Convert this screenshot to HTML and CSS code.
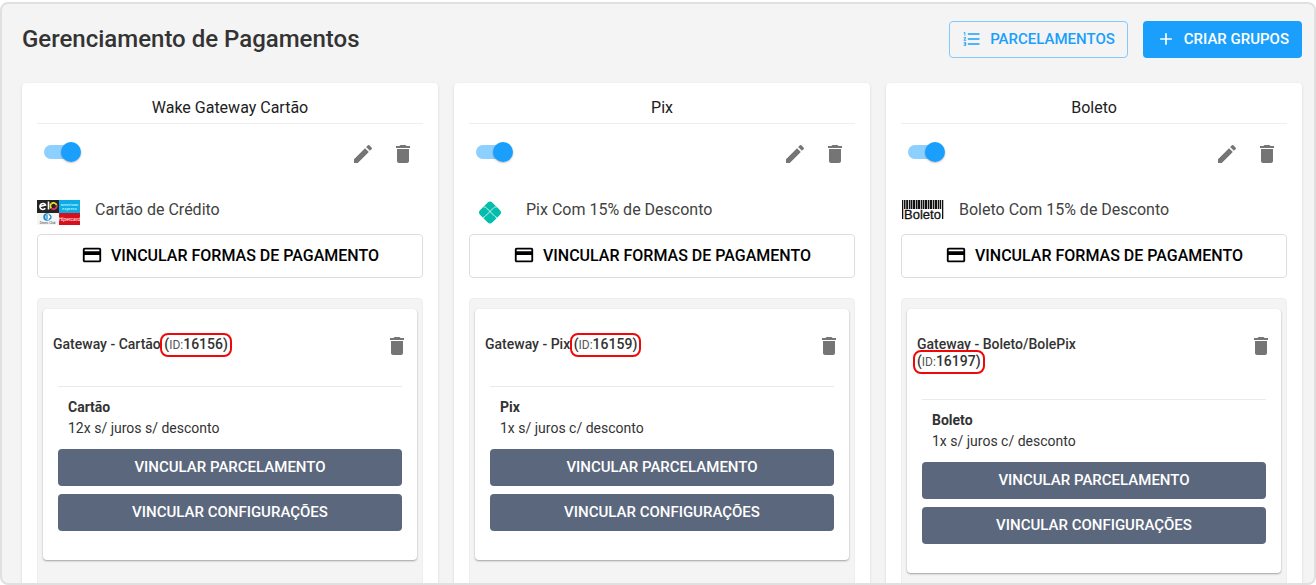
FILE: index.html
```html
<!DOCTYPE html>
<html lang="pt-BR">
<head>
<meta charset="utf-8">
<title>Gerenciamento de Pagamentos</title>
<meta name="viewport" content="width=device-width, initial-scale=1">
<link rel="stylesheet" href="styles.css">
</head>
<body>
<svg class="sprite" aria-hidden="true">
  <symbol id="i-edit" viewBox="0 0 24 24"><path d="M3 17.25V21h3.75L17.81 9.94l-3.75-3.75L3 17.25zM20.71 7.04a1 1 0 0 0 0-1.41l-2.34-2.34a1 1 0 0 0-1.41 0l-1.83 1.83 3.75 3.75 1.83-1.83z"/></symbol>
  <symbol id="i-trash" viewBox="0 0 24 24"><path d="M6 19c0 1.1.9 2 2 2h8c1.1 0 2-.9 2-2V7H6v12zM19 4h-3.5l-1-1h-5l-1 1H5v2h14V4z"/></symbol>
  <symbol id="i-card" viewBox="0 0 24 24"><path d="M20 4H4c-1.11 0-1.99.89-1.99 2L2 18c0 1.11.89 2 2 2h16c1.11 0 2-.89 2-2V6c0-1.11-.89-2-2-2zm0 14H4v-6h16v6zm0-10H4V6h16v2z"/></symbol>
  <symbol id="i-list" viewBox="0 0 24 24"><path d="M2 17h2v.5H3v1h1v.5H2v1h3v-4H2v1zm1-9h1V4H2v1h1v3zm-1 3h1.8L2 13.1v.9h3v-1H3.200L5 10.900V10H2v1zm5-6v2h14V5H7zm0 14h14v-2H7v2zm0-6h14v-2H7v2z"/></symbol>
  <symbol id="i-plus" viewBox="0 0 24 24"><path d="M19 13h-6v6h-2v-6H5v-2h6V5h2v6h6v2z"/></symbol>
</svg>
<main class="frame">
  <header class="topbar">
    <h1 class="page-title">Gerenciamento de Pagamentos</h1>
    <div class="actions">
      <button class="btn btn-outline" type="button"><svg class="icon icon-sm"><use href="#i-list"/></svg>PARCELAMENTOS</button>
      <button class="btn btn-primary" type="button"><svg class="icon icon-sm"><use href="#i-plus"/></svg>CRIAR GRUPOS</button>
    </div>
  </header>

  <div class="groups">
    <section class="group">
      <h2 class="group-title">Wake Gateway Cartão</h2>
      <div class="group-tools">
        <input class="switch" type="checkbox" role="switch" aria-label="Ativar Wake Gateway Cartão" checked>
        <div class="tool-icons">
          <button class="icon-btn" type="button" aria-label="Editar"><svg class="icon"><use href="#i-edit"/></svg></button>
          <button class="icon-btn" type="button" aria-label="Excluir"><svg class="icon"><use href="#i-trash"/></svg></button>
        </div>
      </div>
      <div class="method">
        <svg class="method-logo" viewBox="0 0 43 25" width="43" height="25" aria-hidden="true">
          <rect width="22" height="13" fill="#242424"/>
          <rect x="22" width="21" height="13" fill="#0cace4"/>
          <rect y="13" width="22" height="12" fill="#f3f5f6"/>
          <rect x="22" y="13" width="21" height="12" fill="#d8101c"/>
          <path d="M3 6.500L8.500 5A3 3 0 1 0 8.300 8.300M11.500 1.500V9.500" fill="none" stroke="#fff" stroke-width="1.600"/>
          <path d="M14.400 8.300A3.200 3.200 0 0 1 14.400 3.700" fill="none" stroke="#f4e12c" stroke-width="1.700"/>
          <path d="M14.400 3.700A3.200 3.200 0 0 1 19.700 5.400" fill="none" stroke="#f4e12c" stroke-width="1.800"/>
          <path d="M19.700 5.400A3.200 3.200 0 0 1 14.400 8.300" fill="none" stroke="#e7305a" stroke-width="1.800"/>
          <text class="logo-text logo-bold" x="32.500" y="6" font-size="4" fill="#b8ecff">american</text>
          <text class="logo-text logo-bold" x="32.500" y="10" font-size="4" fill="#b8ecff">express</text>
          <circle cx="10" cy="17" r="3.700" fill="#1784c7"/>
          <circle cx="11" cy="17" r="2.700" fill="#fff"/>
          <path d="M10 15v4M12 15a2 2 0 0 1 0 4" stroke="#1784c7" stroke-width="1.200" fill="none"/>
          <text class="logo-text" x="10.500" y="23.800" font-size="3" fill="#333">Diners Club</text>
          <text class="logo-text logo-slant" x="32.500" y="21" font-size="5" fill="#fff">Hipercard</text>
        </svg>
        <span class="method-name">Cartão de Crédito</span>
      </div>
      <button class="btn btn-link" type="button"><svg class="icon icon-md"><use href="#i-card"/></svg>VINCULAR FORMAS DE PAGAMENTO</button>
      <div class="panel">
        <article class="gateway">
          <div class="gateway-head">
            <h3 class="gateway-title">Gateway - Cartão <span class="gateway-id">(<small class="id-label">ID:</small>16156)</span></h3>
            <button class="icon-btn" type="button" aria-label="Excluir"><svg class="icon"><use href="#i-trash"/></svg></button>
          </div>
          <div class="gateway-body">
            <div class="plan"><strong class="plan-name">Cartão</strong><span>12x s/ juros s/ desconto</span></div>
            <button class="btn btn-slate" type="button">VINCULAR PARCELAMENTO</button>
            <button class="btn btn-slate" type="button">VINCULAR CONFIGURAÇÕES</button>
          </div>
        </article>
      </div>
    </section>

    <section class="group">
      <h2 class="group-title">Pix</h2>
      <div class="group-tools">
        <input class="switch" type="checkbox" role="switch" aria-label="Ativar Pix" checked>
        <div class="tool-icons">
          <button class="icon-btn" type="button" aria-label="Editar"><svg class="icon"><use href="#i-edit"/></svg></button>
          <button class="icon-btn" type="button" aria-label="Excluir"><svg class="icon"><use href="#i-trash"/></svg></button>
        </div>
      </div>
      <div class="method">
        <svg class="method-logo" viewBox="0 0 42 25" width="42" height="25" aria-hidden="true">
          <path d="M18.500 2.700Q21 .2 23.500 2.700L30.800 10Q33.300 12.500 30.800 15L23.500 22.300Q21 24.800 18.500 22.300L11.200 15Q8.700 12.500 11.200 10Z" fill="#05bdad"/>
          <path d="M14.500 7h1q1 0 1.700.7L26 16.500q1 1 2 1M27.500 7h-1q-1 0-1.700.7L16 16.500q-1 1-2 1" fill="none" stroke="#dff8f5" stroke-width=".9"/>
        </svg>
        <span class="method-name">Pix Com 15% de Desconto</span>
      </div>
      <button class="btn btn-link" type="button"><svg class="icon icon-md"><use href="#i-card"/></svg>VINCULAR FORMAS DE PAGAMENTO</button>
      <div class="panel">
        <article class="gateway">
          <div class="gateway-head">
            <h3 class="gateway-title">Gateway - Pix <span class="gateway-id">(<small class="id-label">ID:</small>16159)</span></h3>
            <button class="icon-btn" type="button" aria-label="Excluir"><svg class="icon"><use href="#i-trash"/></svg></button>
          </div>
          <div class="gateway-body">
            <div class="plan"><strong class="plan-name">Pix</strong><span>1x s/ juros c/ desconto</span></div>
            <button class="btn btn-slate" type="button">VINCULAR PARCELAMENTO</button>
            <button class="btn btn-slate" type="button">VINCULAR CONFIGURAÇÕES</button>
          </div>
        </article>
      </div>
    </section>

    <section class="group">
      <h2 class="group-title">Boleto</h2>
      <div class="group-tools">
        <input class="switch" type="checkbox" role="switch" aria-label="Ativar Boleto" checked>
        <div class="tool-icons">
          <button class="icon-btn" type="button" aria-label="Editar"><svg class="icon"><use href="#i-edit"/></svg></button>
          <button class="icon-btn" type="button" aria-label="Excluir"><svg class="icon"><use href="#i-trash"/></svg></button>
        </div>
      </div>
      <div class="method">
        <svg class="method-logo" viewBox="0 0 43 25" width="43" height="25" aria-hidden="true">
          <path d="M1 0h1.300v19H1zM3 0h1.500v9H3zM5.200 0h2v9h-2zM8 0h1.500v9H8zM10 0h1.400v9H10zM12 0h2.300v9H12zM15 0h1.500v9H15zM17 0h2.300v9H17zM20 0h1.400v9H20zM22 0h1.400v9H22zM24 0h2.300v9H24zM27 0h1.400v9H27zM29 0h2.300v9H29zM32 0h1.400v9H32zM34 0h2.300v9H34zM37 0h1.400v9H37zM39 0h1.200v9H39zM41 0h1.300v19H41z" fill="#111"/>
          <text class="logo-text" x="21.500" y="18.800" font-size="13" fill="#111" stroke="#111" stroke-width=".3">Boleto</text>
        </svg>
        <span class="method-name">Boleto Com 15% de Desconto</span>
      </div>
      <button class="btn btn-link" type="button"><svg class="icon icon-md"><use href="#i-card"/></svg>VINCULAR FORMAS DE PAGAMENTO</button>
      <div class="panel">
        <article class="gateway">
          <div class="gateway-head">
            <h3 class="gateway-title">Gateway - Boleto/BolePix <span class="gateway-id">(<small class="id-label">ID:</small>16197)</span></h3>
            <button class="icon-btn" type="button" aria-label="Excluir"><svg class="icon"><use href="#i-trash"/></svg></button>
          </div>
          <div class="gateway-body">
            <div class="plan"><strong class="plan-name">Boleto</strong><span>1x s/ juros c/ desconto</span></div>
            <button class="btn btn-slate" type="button">VINCULAR PARCELAMENTO</button>
            <button class="btn btn-slate" type="button">VINCULAR CONFIGURAÇÕES</button>
          </div>
        </article>
      </div>
    </section>
  </div>
</main>
</body>
</html>
```
FILE: styles.css
```css
* { box-sizing: border-box; }
body {
  margin: 0;
  padding-top: 2px;
  height: 100vh;
  overflow: hidden;
  background: #fff;
  color: #333;
  font-family: Roboto, "Liberation Sans", sans-serif;
  font-size: 14px;
}
.sprite { display: none; }
.frame {
  height: 100%;
  overflow: hidden;
  padding: 17px 12px 0 20px;
  background: #f4f4f4;
  border: 2px solid #e0e0e0;
  border-radius: 8px;
}
h1, h2, h3 { margin: 0; font-weight: 500; }
button { font: inherit; cursor: pointer; }
.icon { width: 24px; height: 24px; fill: currentColor; flex: none; }
.icon-md { width: 22px; height: 22px; }
.icon-sm { width: 20px; height: 20px; }

.topbar {
  display: flex;
  justify-content: space-between;
  align-items: center;
  margin-bottom: 25px;
}
.page-title { font-size: 24px; line-height: 37px; }
.actions { display: flex; gap: 15px; }

.btn {
  display: flex;
  align-items: center;
  justify-content: center;
  height: 37px;
  padding: 0 12px 2px;
  border: 1px solid transparent;
  border-radius: 4px;
  font-size: 15px;
  font-weight: 500;
}
.btn-outline { gap: 8px; background: transparent; color: #1a9ffd; border-color: #84c9fb; }
.btn-primary { gap: 8px; background: #1a9ffd; color: #fff; }
.btn-link {
  width: 100%;
  height: 44px;
  gap: 8px;
  background: #fff;
  color: #000;
  border-color: #ddd;
  font-size: 16px;
}
.btn-slate { width: 100%; background: #5b677d; color: #fff; }

.groups { display: grid; grid-template-columns: repeat(3, 1fr); gap: 16px; }
.group {
  display: flex;
  flex-direction: column;
  padding: 15px 15px 20px;
  background: #fff;
  border-radius: 4px;
  box-shadow: 0 1px 3px rgba(0, 0, 0, .12);
}
.group-title {
  padding-bottom: 6px;
  border-bottom: 1px solid #eee;
  color: #212121;
  font-size: 16px;
  font-weight: 400;
  line-height: 19px;
  text-align: center;
}
.group-tools {
  display: flex;
  justify-content: space-between;
  align-items: center;
  padding: 18px 8px 0 7px;
}
.tool-icons { display: flex; gap: 16px; }
.icon-btn { display: flex; padding: 0; border: 0; background: none; color: #757575; }
.switch {
  appearance: none;
  display: grid;
  align-items: center;
  width: 37px;
  height: 20px;
  margin: 0 0 4px;
}
.switch::before,
.switch::after { content: ""; grid-area: 1 / 1; }
.switch::before {
  width: 34px;
  height: 14px;
  border-radius: 7px;
  background: #8dcffe;
}
.switch::after {
  justify-self: end;
  width: 20px;
  height: 20px;
  border-radius: 50%;
  background: #1a9ffd;
  box-shadow: 0 1px 2px rgba(0, 0, 0, .25);
}
.method { display: flex; align-items: flex-start; gap: 15px; margin: 34px 0 9px; }
.method-logo { flex: none; }
.method-name { color: #424242; font-size: 16px; line-height: 19px; }
.logo-text { font-family: "Liberation Sans", sans-serif; text-anchor: middle; }
.logo-bold { font-weight: 700; }
.logo-slant { font-style: italic; }

.panel {
  flex: 1;
  margin-top: 20px;
  padding: 10px 5px 40px;
  background: #f4f4f4;
  border: 1px solid #eee;
  border-radius: 4px;
}
.gateway {
  padding: 25px 15px 29px;
  background: #fff;
  border-radius: 4px;
  box-shadow: 0 1px 2px rgba(0, 0, 0, .35);
}
.gateway-head {
  display: flex;
  justify-content: space-between;
  align-items: flex-start;
  margin: 0 -7px 28px -5px;
}
.gateway-title { max-width: 200px; padding-top: 2px; font-size: 14px; line-height: 17px; }
.gateway-id {
  display: inline-block;
  margin: -3px -4px;
  padding: 1px 2px;
  border: 2px solid #f00808;
  border-radius: 8px;
  background: #fff;
  white-space: nowrap;
}
.id-label { color: #555; font-size: 12px; font-weight: 400; }
.gateway-body { display: grid; gap: 8px; border-top: 1px solid #e9e9ef; padding-top: 10px; }
.plan { display: grid; padding: 0 0 2px 10px; line-height: 21px; }
.plan-name { font-weight: 700; }
```
